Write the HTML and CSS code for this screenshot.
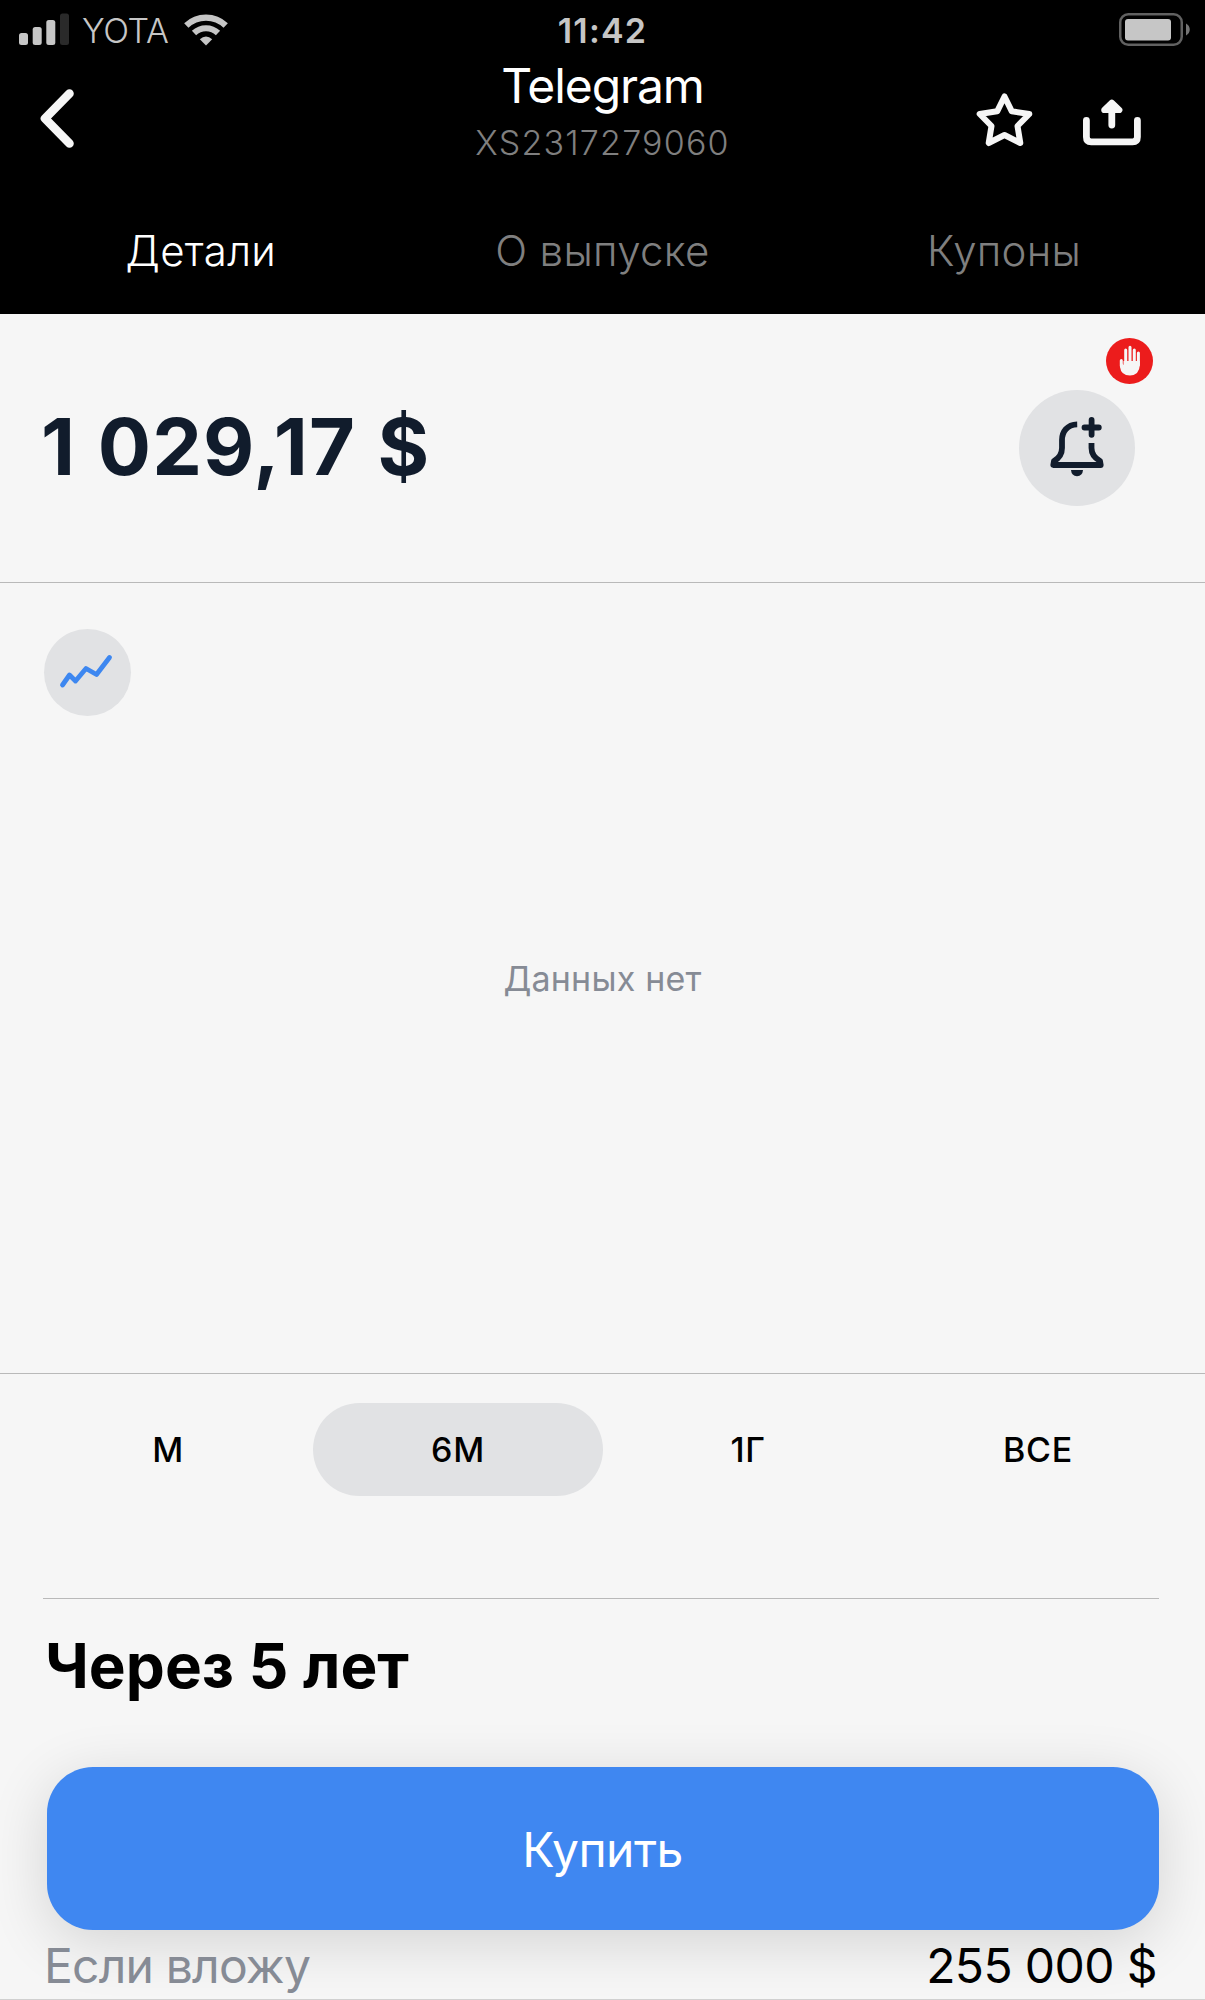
FILE: index.html
```html
<!DOCTYPE html>
<html lang="ru">

<head>
    <meta charset="UTF-8">
    <meta name="viewport" content="width=device-width, initial-scale=1.0">
    <title>Telegram XS2317279060</title>
    <link rel="stylesheet" href="styles.css">
</head>

<body>
    <header class="header">
        <div class="status-bar">
            <div class="carrier">
                <svg class="signal" width="50" height="32" viewBox="0 0 50 32">
                    <g fill="#c6c6c6">
                        <rect x="0" y="20" width="9" height="12" rx="2.5" />
                        <rect x="13.7" y="14" width="9" height="18" rx="2.5" />
                        <rect x="27.3" y="7" width="9" height="25" rx="2.5" />
                    </g>
                    <rect x="41" y="0.5" width="9" height="31.5" rx="2.5" fill="#2a2a2a" />
                </svg>
                <span class="operator">YOTA</span>
                <svg class="wifi" width="44" height="33" viewBox="0 0 44 33">
                    <g fill="none" stroke="#c6c6c6" stroke-width="6.2">
                        <path d="M2.3 12.5 A28.5 28.5 0 0 1 41.7 12.5" />
                        <path d="M10 20 A17.5 17.5 0 0 1 34 20" />
                    </g>
                    <path d="M22 32.5 L15.8 26.2 Q22 20.6 28.2 26.2 Z" fill="#c6c6c6" />
                </svg>
            </div>
            <span class="time">11:42</span>
            <svg class="battery" width="72" height="34" viewBox="0 0 72 34">
                <rect x="1.25" y="1.25" width="61.5" height="30.5" rx="8" fill="none" stroke="#616161" stroke-width="2.5" />
                <rect x="6" y="6" width="46" height="21.5" rx="3" fill="#c6c6c6" />
                <path d="M67 10.5 C72 13 72 20 67 22.5 Z" fill="#757575" />
            </svg>
        </div>

        <div class="title-bar">
            <svg class="back" width="36" height="62" viewBox="0 0 36 62">
                <path d="M30.5 5.5 L6 30.5 L30.5 55.5" fill="none" stroke="#f6f6f6" stroke-width="8.6" stroke-linecap="round" stroke-linejoin="round" />
            </svg>
            <div class="title">
                <h1>Telegram</h1>
                <p>XS2317279060</p>
            </div>
            <div class="actions">
                <svg width="58" height="56" viewBox="0 0 58 56">
                    <path d="M28.5 4.5 L35.8 19.3 L53.3 22 L41.5 34 L44.3 51 L28.5 43 L12.7 51 L15.5 34 L3.7 22 L21.2 19.3 Z" fill="none" stroke="#f6f6f6" stroke-width="6" stroke-linejoin="round" />
                </svg>
                <svg width="58" height="48" viewBox="0 0 58 48">
                    <g fill="none" stroke="#f6f6f6" stroke-width="6.8" stroke-linecap="round" stroke-linejoin="round">
                        <path d="M3.4 22.5 V39 Q3.4 43.8 8.2 43.8 H49.6 Q54.4 43.8 54.4 39 V22.5" />
                        <path d="M28.8 27 V8" />
                        <path d="M21.3 12 L28.8 4.8 L36.3 12 Z" fill="#f6f6f6" stroke-width="6.2" />
                    </g>
                </svg>
            </div>
        </div>

        <nav class="tabs">
            <a class="tab active">Детали</a>
            <a class="tab">О выпуске</a>
            <a class="tab">Купоны</a>
        </nav>
    </header>

    <section class="quote">
        <div class="price">1 029,17 $</div>
        <div class="alert">
            <svg width="54" height="62" viewBox="0 0 54 62">
                <g fill="none" stroke="#111c2c" stroke-width="5.8">
                    <path d="M27.2 9.3 C17 9.5 12 17 12 25 V33 C12 40 8.5 43.5 4 46 L3.3 50 H50.7 L50 46 C45.5 43.5 41.5 40 41.5 33 V28" stroke-linejoin="round" />
                    <path d="M34.5 12.5 H48.8 M41.6 5 V19.8" stroke-linecap="round" />
                </g>
                <path d="M21 55 H33 Q32.5 61 27 61.3 Q21.5 61 21 55 Z" fill="#111c2c" />
            </svg>
            <span class="stop">
                <svg width="22" height="32" viewBox="0 0 22 32">
                    <path d="M1 16 V22 Q2 30.5 11 30.5 Q20.5 30 20.8 20 V16 H4.5 V20 Z" fill="#f6f6f6" />
                    <g stroke="#f6f6f6" stroke-width="3" stroke-linecap="round">
                        <path d="M2.3 15.5 V21 M6.7 5 V19 M11 2.3 V19 M15.3 5 V19 M19.4 8 V20" />
                    </g>
                </svg>
            </span>
        </div>
    </section>

    <section class="chart">
        <div class="chart-type">
            <svg width="54" height="36" viewBox="0 0 54 36">
                <path d="M3.5 32 L10.5 22 L16.5 28 L27 15.5 L37.5 21.5 L50.5 4.5" fill="none" stroke="#3d87f0" stroke-width="4.8" stroke-linecap="round" stroke-linejoin="round" />
            </svg>
        </div>
        <p class="empty">Данных нет</p>
    </section>

    <div class="periods">
        <button class="period">М</button>
        <button class="period selected">6М</button>
        <button class="period">1Г</button>
        <button class="period">ВСЕ</button>
    </div>

    <section class="forecast">
        <h2>Через 5 лет</h2>
        <button class="buy">Купить</button>
        <div class="row">
            <span class="label">Если вложу</span>
            <span class="value">255 000 $</span>
        </div>
    </section>
</body>

</html>
```

FILE: styles.css
```css
* {
    box-sizing: border-box;
}

body {
    margin: 0;
    width: 1205px;
    height: 2000px;
    overflow: hidden;
    background-color: #f6f6f6;
    color: #000;
    font-family: Inter, "Liberation Sans", sans-serif;
}

h1,
h2,
p {
    margin: 0;
}

svg {
    display: block;
    flex: none;
}

button {
    border: 0;
    padding: 0;
    background: none;
    font-family: inherit;
}

.header {
    height: 314px;
    background-color: #000;
    color: #fff;
}

/* status bar */
.status-bar {
    display: grid;
    grid-template-columns: 1fr auto 1fr;
    height: 60px;
    padding: 13px 14px 0;
    color: #c6c6c6;
    font-size: 34px;
    line-height: 36px;
}

.carrier {
    display: flex;
    padding-left: 5px;
}

.operator {
    margin-left: 13px;
    width: 88px;
    font-weight: 300;
    letter-spacing: -0.3px;
}

.wifi {
    margin-left: 14px;
}

.time {
    font-weight: 600;
    letter-spacing: 1.2px;
}

.battery {
    justify-self: end;
}

/* title with back / favourite / share */
.title-bar {
    display: grid;
    grid-template-columns: 1fr auto 1fr;
    height: 140px;
    padding: 0 64px;
}

.back {
    margin: 28px 0 0 -25px;
}

.title {
    text-align: center;
}

.title h1 {
    font-size: 48px;
    font-weight: 400;
    line-height: 51px;
    letter-spacing: -1.1px;
}

.title p {
    margin-top: 12px;
    color: #7f7f7f;
    font-size: 34px;
    font-weight: 300;
    line-height: 40px;
    letter-spacing: 1.2px;
}

.actions {
    display: flex;
    justify-content: flex-end;
    gap: 49px;
    padding-top: 32px;
}

.actions svg + svg {
    margin-top: 6px;
}

.tabs {
    display: grid;
    grid-template-columns: repeat(3, 1fr);
    padding-top: 26px;
    text-align: center;
}

.tab {
    color: #7f7f7f;
    font-size: 42px;
    font-weight: 300;
    line-height: 50px;
    letter-spacing: 0.3px;
}

.tab.active {
    color: #fff;
}

/* price */
.quote {
    display: flex;
    justify-content: space-between;
    align-items: center;
    height: 269px;
    padding: 0 70px 0 41px;
    border-bottom: 1px solid #b9b9b9;
}

.price {
    padding-bottom: 5px;
    color: #111c2c;
    font-size: 79px;
    font-weight: 700;
    letter-spacing: 1.2px;
    word-spacing: 1.5px;
}

.alert {
    position: relative;
    display: flex;
    justify-content: center;
    align-items: center;
    width: 116px;
    height: 116px;
    padding-bottom: 4px;
    border-radius: 50%;
    background-color: #e1e2e4;
}

.stop {
    position: absolute;
    top: -52px;
    right: -18px;
    display: flex;
    justify-content: center;
    align-items: center;
    width: 47px;
    height: 46px;
    border-radius: 50%;
    background-color: #ec1c1c;
}

/* chart area */
.chart {
    height: 791px;
    padding: 46px 44px 0;
    border-bottom: 1px solid #b9b9b9;
}

.chart-type {
    display: flex;
    justify-content: center;
    align-items: center;
    width: 87px;
    height: 87px;
    padding: 0 4px 4px 0;
    border-radius: 50%;
    background-color: #e1e2e4;
}

.empty {
    margin-top: 243px;
    color: #868b95;
    font-size: 34px;
    line-height: 40px;
    letter-spacing: 0.2px;
    text-align: center;
}

.periods {
    display: grid;
    grid-template-columns: repeat(4, 1fr);
    padding: 29px 22px 0 23px;
}

.period {
    height: 93px;
    border-radius: 47px;
    font-size: 34px;
    font-weight: 500;
    letter-spacing: 0.7px;
}

.period.selected {
    background-color: #e1e2e4;
}

/* forecast */
.forecast h2 {
    margin: 102px 46px 0 43px;
    padding: 29px 0 0 2px;
    border-top: 1px solid #b9b9b9;
    font-size: 62px;
    font-weight: 700;
    line-height: 76px;
}

.buy {
    display: block;
    width: 1112px;
    height: 163px;
    margin: 63px auto 0;
    padding-top: 2px;
    border-radius: 46px;
    background-color: #3f87f1;
    box-shadow: 0 12px 60px rgba(0, 0, 0, 0.14);
    color: #fff;
    font-size: 48px;
    letter-spacing: -0.6px;
}

.row {
    display: flex;
    justify-content: space-between;
    height: 70px;
    padding: 6px 48px 0 44px;
    border-bottom: 1px solid #d0d0d0;
    font-size: 48px;
    line-height: 60px;
    letter-spacing: -0.6px;
}

.label {
    color: #868b95;
    letter-spacing: -0.8px;
}
```
